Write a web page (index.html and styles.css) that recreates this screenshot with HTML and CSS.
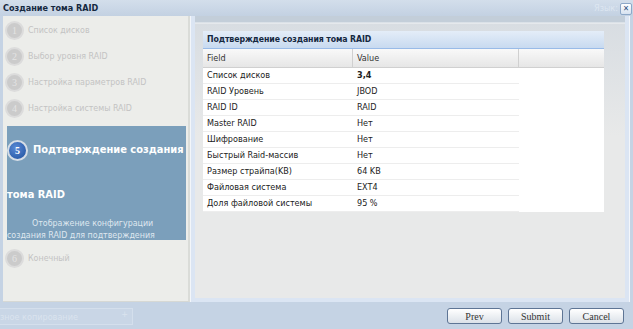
FILE: index.html
```html
<!DOCTYPE html>
<html lang="ru">
<head>
  <meta charset="UTF-8" />
  <title>Создание тома RAID</title>
  <link rel="stylesheet" href="styles.css">
</head>
<body>
  <div class="window">
    <div class="titlebar">
      <span class="title">Создание тома RAID</span>
      <span class="ghost-lang">Язык:</span>
      <span class="close">&#x2715;</span>
    </div>

    <div class="main">
      <div class="steps">
        <div class="step"><span class="num">1</span>Список дисков</div>
        <div class="step"><span class="num">2</span>Выбор уровня RAID</div>
        <div class="step"><span class="num">3</span>Настройка параметров RAID</div>
        <div class="step"><span class="num">4</span>Настройка системы RAID</div>
        <div class="step-active">
          <div class="active-title"><span class="num-active">5</span><span class="nowrap">Подтверждение создания</span> тома RAID</div>
          <div class="active-desc">Отображение конфигурации создания RAID для подтверждения</div>
        </div>
        <div class="step"><span class="num">6</span>Конечный</div>
      </div>

      <div class="content">
        <div class="content-body">
          <div class="grid">
            <div class="grid-title">Подтверждение создания тома RAID</div>
            <div class="grid-head">
              <div class="col c1">Field</div>
              <div class="col c2">Value</div>
              <div class="col c3"></div>
            </div>
            <div class="grid-rows">
              <div class="row"><div class="c1">Список дисков</div><div class="c2 bold">3,4</div></div>
              <div class="row"><div class="c1">RAID Уровень</div><div class="c2">JBOD</div></div>
              <div class="row"><div class="c1">RAID ID</div><div class="c2">RAID</div></div>
              <div class="row"><div class="c1">Master RAID</div><div class="c2">Нет</div></div>
              <div class="row"><div class="c1">Шифрование</div><div class="c2">Нет</div></div>
              <div class="row"><div class="c1">Быстрый Raid-массив</div><div class="c2">Нет</div></div>
              <div class="row"><div class="c1">Размер страйпа(KB)</div><div class="c2">64 KB</div></div>
              <div class="row"><div class="c1">Файловая система</div><div class="c2">EXT4</div></div>
              <div class="row"><div class="c1">Доля файловой системы</div><div class="c2">95 %</div></div>
            </div>
          </div>
        </div>
      </div>
    </div>

    <div class="footer">
      <div class="ghost-input">зное копирование<span class="ghost-plus">+</span></div>
      <div class="buttons">
        <button>Prev</button>
        <button>Submit</button>
        <button>Cancel</button>
      </div>
    </div>
  </div>
</body>
</html>
```

FILE: styles.css
```css
body {
  margin: 0;
  background-color: #c5d3e4;
  font-family: "DejaVu Sans Condensed", "Liberation Sans", Arial, sans-serif;
  font-size: 9px;
  color: #222;
  overflow: hidden;
}
.window {
  width: 633px;
  height: 329px;
}
.titlebar {
  height: 16px;
  display: flex;
  align-items: center;
  padding: 0 0 0 3px;
  background: linear-gradient(#d3deeb, #c3d1e2);
  position: relative;
}
.title {
  font-weight: bold;
  font-size: 9px;
  color: #15283f;
}
.ghost-lang {
  position: absolute;
  left: 594px;
  top: 3px;
  color: #dde6f1;
  font-size: 9px;
}
.close {
  position: absolute;
  left: 620px;
  top: 3px;
  width: 10px;
  height: 10px;
  font-size: 8px;
  line-height: 10px;
  text-align: center;
  color: #2d4f7e;
  background: linear-gradient(#ffffff, #d6e2f0);
  border: 1px solid #8da8c8;
  border-radius: 2px;
}
.main {
  display: flex;
  height: 286px;
}
.steps {
  width: 187px;
  margin-left: 3px;
  background-color: #ecedea;
  border-right: 2px solid #dadcd8;
  border-bottom: 1px solid #d6d8d4;
  padding-top: 1px;
  box-sizing: border-box;
  overflow: hidden;
}
.step {
  display: flex;
  align-items: center;
  height: 26px;
  color: #c3c3c3;
  font-size: 8.8px;
  padding-left: 2px;
}
.num {
  width: 15px;
  height: 15px;
  border-radius: 50%;
  background-color: #cbcbcb;
  border: 2px solid #dcdcdc;
  color: #e4e4e4;
  font-size: 10px;
  font-family: "Liberation Serif", serif;
  display: flex;
  align-items: center;
  justify-content: center;
  margin-right: 4px;
}
.step-active {
  background-color: #7b9fbb;
  margin: 5px 2px 5px 4px;
  height: 114px;
  overflow: hidden;
  color: #fff;
  padding-top: 1px;
  box-sizing: border-box;
}
.active-title {
  font-weight: bold;
  font-size: 11px;
  line-height: 45px;
}
.nowrap {
  white-space: nowrap;
}
.num-active {
  display: inline-block;
  width: 17px;
  height: 17px;
  line-height: 17px;
  border-radius: 50%;
  background: radial-gradient(circle at 40% 35%, #5a8ad6, #1d4f9c);
  border: 2px solid #d6dde6;
  font-size: 10px;
  font-family: "Liberation Serif", serif;
  text-align: center;
  vertical-align: middle;
  margin: 0 5px 0 0;
}
.active-desc {
  color: #dfe7ef;
  font-size: 8.8px;
  line-height: 12px;
  text-indent: 25px;
}
.content {
  flex: 1;
  margin-right: 3px;
  border: 1px solid #f3f6fa;
  border-width: 0 1px 0 1px;
  background-color: #dbe5f3;
  padding: 0 4px 4px 4px;
  display: flex;
}
.content-body {
  flex: 1;
  background: linear-gradient(#c3ced9 0px, #c3ced9 6px, #f2f4f6 7px, #d8dde2 8px, #e8e9e9 120px);
  padding: 15px 21px 0 8px;
}
.grid {
  background-color: #fff;
}
.grid-title {
  height: 17px;
  line-height: 17px;
  padding-left: 4px;
  font-weight: bold;
  font-size: 8.7px;
  letter-spacing: -0.1px;
  color: #15283f;
  background: linear-gradient(#e4edf8, #c8daf0);
  border-bottom: 1px solid #99bbe8;
}
.grid-head {
  display: flex;
  height: 18px;
  line-height: 18px;
  background: linear-gradient(#f9f9f9, #e6e6e6);
  border-bottom: 1px solid #d0d0d0;
  color: #333;
}
.col {
  padding-left: 4px;
  border-right: 1px solid #d0d0d0;
  box-sizing: border-box;
}
.c1 {
  width: 150px;
  padding-left: 4px;
  box-sizing: border-box;
}
.c2 {
  width: 166px;
  padding-left: 4px;
  box-sizing: border-box;
}
.c3 {
  flex: 1;
  border-right: none;
}
.row {
  display: flex;
  width: 316px;
  height: 16px;
  line-height: 15px;
  border-bottom: 1px solid #ededed;
  box-sizing: border-box;
}
.bold {
  font-weight: bold;
}
.footer {
  display: flex;
  justify-content: space-between;
  align-items: center;
  height: 27px;
}
.ghost-input {
  position: relative;
  width: 133px;
  height: 17px;
  line-height: 17px;
  border: 1px solid #d4dfec;
  border-left: none;
  background-color: #c9d6e6;
  color: #dae3ee;
  font-size: 9px;
  margin-top: 2px;
  box-sizing: border-box;
}
.ghost-plus {
  position: absolute;
  right: 4px;
  top: -3px;
  font-size: 9px;
}
.buttons {
  display: flex;
  gap: 6px;
  margin-right: 9px;
  margin-top: 1px;
}
button {
  width: 55px;
  height: 16px;
  padding: 0;
  font-family: "Liberation Serif", serif;
  font-size: 10px;
  color: #333;
  background: linear-gradient(#ffffff, #dbe1e8);
  border: 1px solid #5e7595;
  border-radius: 3px;
}
```
